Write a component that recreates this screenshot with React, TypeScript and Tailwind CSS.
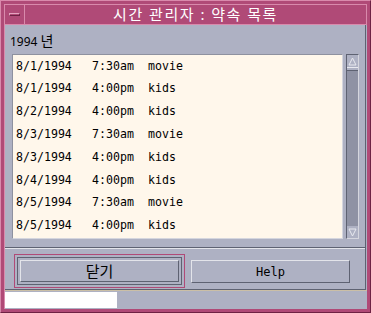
const rows = [
  ["8/1/1994", "7:30am", "movie"],
  ["8/1/1994", "4:00pm", "kids"],
  ["8/2/1994", "4:00pm", "kids"],
  ["8/3/1994", "7:30am", "movie"],
  ["8/3/1994", "4:00pm", "kids"],
  ["8/4/1994", "4:00pm", "kids"],
  ["8/5/1994", "7:30am", "movie"],
  ["8/5/1994", "4:00pm", "kids"],
];

const mono = { fontFamily: '"DejaVu Sans Mono", "Liberation Mono", monospace' };

export default function App() {
  return (
    <div
      className="w-[371px] h-[313px] bg-[#b04a77] border border-[#d98aac] border-r-[#6e2244] border-b-[#6e2244] p-[3px] flex flex-col"
      style={{ fontFamily: '"Noto Sans", "Noto Sans CJK KR", sans-serif' }}
    >
      {/* title bar */}
      <div className="h-[21px] flex border border-[#d98aac]">
        <div className="w-[20px] flex items-center justify-center border-r border-[#d98aac]">
          <div className="w-[11px] h-[3px] bg-[#b04a77] border border-[#e5a3c0] border-b-[#6e2244] border-r-[#6e2244]" />
        </div>
        <div className="flex-1 flex items-center justify-center text-white text-[15px] leading-none tracking-[1.5px]">
          시간 관리자 : 약속 목록
        </div>
      </div>

      {/* body */}
      <div className="flex-1 bg-[#aeb1c3] border-l border-[#d98aac] flex flex-col">
        <div className="flex-1 flex flex-col border-r border-b border-[#5e6272] mr-[1px]">
          <div className="h-[29px] pl-[5px] pt-[9px] text-[12px] leading-none text-black">
            1994 <span className="text-[14px]">년</span>
          </div>

          <div className="flex pl-[7px]">
            <div className="w-[331px] h-[185px] bg-[#fff7eb] border border-[#8e919f] border-r-[#d5d6de] border-b-[#d5d6de] flex flex-col text-[11.6px] text-black" style={mono}>
              {rows.map((r, i) => (
                <div key={i} className="h-[22.8px] flex items-center pl-[3px] leading-none">
                  <span className="w-[76px]">{r[0]}</span>
                  <span className="w-[56px]">{r[1]}</span>
                  <span>{r[2]}</span>
                </div>
              ))}
            </div>
            <div className="ml-[3px] w-[13px] h-[185px] bg-[#8f92a4] border border-[#5e6272] border-r-[#d5d6de] border-b-[#d5d6de] flex flex-col">
              <div className="h-[12px] bg-[#aeb1c3] flex items-center justify-center">
                <svg width="9" height="9" viewBox="0 0 9 9">
                  <path d="M4.5 1 L8 8 L1 8 Z" fill="none" stroke="#e8e9ef" strokeWidth="1" />
                </svg>
              </div>
              <div className="h-[4px] bg-[#aeb1c3] border-t border-[#e8e9ef] border-b border-b-[#5e6272]" />
              <div className="flex-1" />
              <div className="h-[12px] bg-[#aeb1c3] flex items-center justify-center">
                <svg width="9" height="9" viewBox="0 0 9 9">
                  <path d="M1 1 L8 1 L4.5 8 Z" fill="none" stroke="#e8e9ef" strokeWidth="1" />
                </svg>
              </div>
            </div>
          </div>

          <div className="mt-[8px] h-[2px] border-t border-[#5e6272] border-b border-b-[#e3e4ea]" />

          <div className="flex items-start pl-[9px] pt-[5px]">
            <div className="w-[171px] h-[34px] border border-[#b04a77] p-[2px]">
              <div className="w-full h-full border border-[#5e6272] p-[2px]">
                <div className="w-full h-full border border-[#e3e4ea] border-r-[#5e6272] border-b-[#5e6272] flex items-center justify-center text-[15px] leading-none text-black">
                  닫기
                </div>
              </div>
            </div>
            <div className="ml-[6px] mt-[6px] w-[159px] h-[23px] border border-[#e3e4ea] border-r-[#5e6272] border-b-[#5e6272] flex items-center justify-center text-[12px] text-black" style={mono}>
              Help
            </div>
          </div>
        </div>

        {/* status line */}
        <div className="h-[19px] border-t border-[#cbbfa6] flex">
          <div className="w-[112px] h-[16px] mt-[1px] bg-white" />
        </div>
      </div>
    </div>
  );
}
